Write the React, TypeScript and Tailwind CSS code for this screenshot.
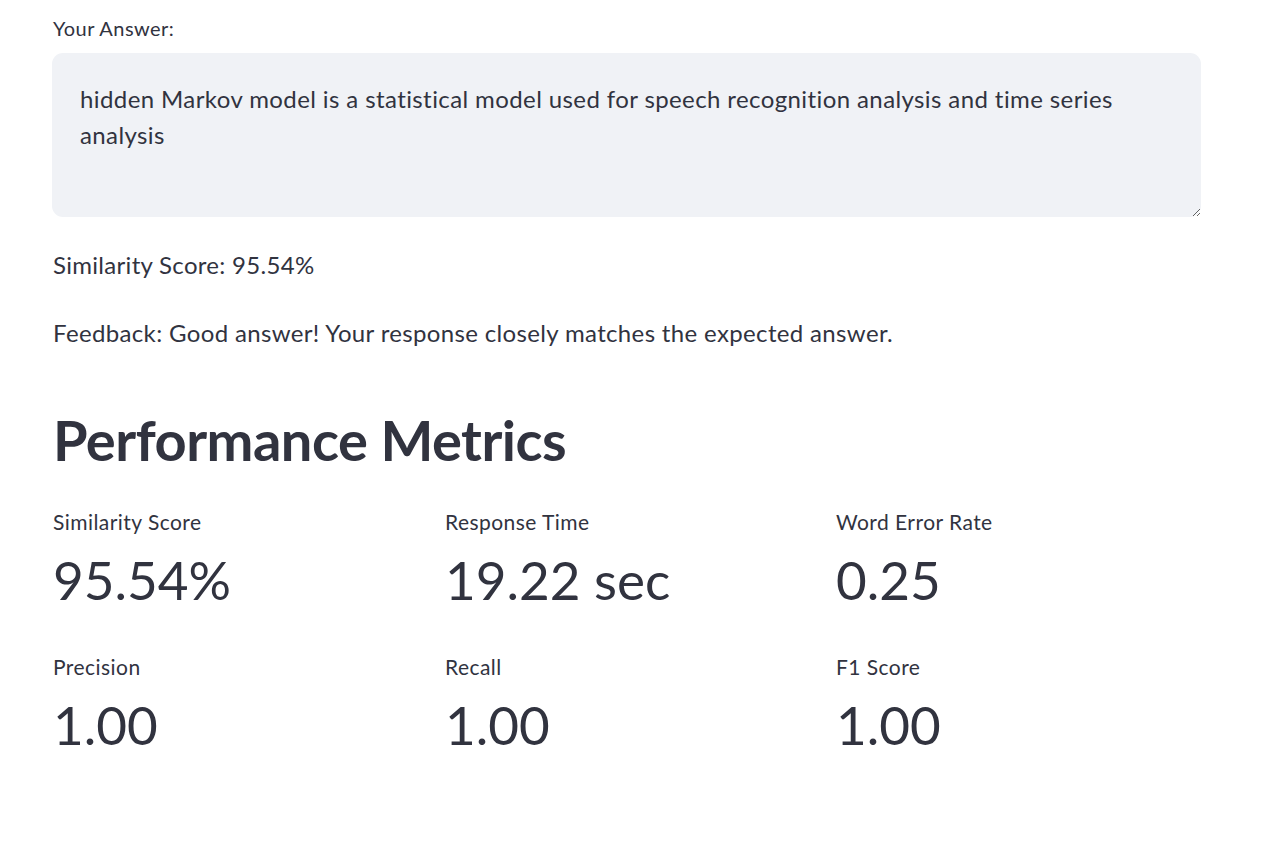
import React from 'react';

const metrics = [
  { label: 'Similarity Score', value: '95.54%' },
  { label: 'Response Time', value: '19.22 sec' },
  { label: 'Word Error Rate', value: '0.25' },
  { label: 'Precision', value: '1.00' },
  { label: 'Recall', value: '1.00' },
  { label: 'F1 Score', value: '1.00' },
];

export default function App() {
  return (
    <div
      className="min-h-screen bg-white text-[#31333f]"
      style={{ fontFamily: 'Lato, "Noto Sans", sans-serif' }}
    >
      <div className="w-[1149px] ml-[52px] pt-[15px]">
        {/* Answer box */}
        <label className="block text-[20px] leading-[26px] tracking-[0.45px] pl-[1px]">Your Answer:</label>
        <textarea
          readOnly
          defaultValue="hidden Markov model is a statistical model used for speech recognition analysis and time series analysis"
          className="mt-[12px] block w-full h-[164px] rounded-[11px] bg-[#f0f2f6] px-[28px] pt-[28px] text-[24px] leading-[36px] tracking-[0.4px] text-[#31333f] outline-none border-0"
        />

        {/* Result text */}
        <p className="mt-[32px] pl-[1px] text-[24px] leading-[32px] tracking-[0.3px]">Similarity Score: 95.54%</p>
        <p className="mt-[36px] pl-[1px] text-[24px] leading-[32px] tracking-[0.35px]">
          Feedback: Good answer! Your response closely matches the expected answer.
        </p>

        {/* Metrics */}
        <h2 className="mt-[56px] pl-[1px] text-[56px] leading-[70px] font-bold tracking-[-0.5px]">
          Performance Metrics
        </h2>
        <div className="mt-[34px] grid grid-cols-[392px_391px_1fr] gap-y-[44px] pl-[1px]">
          {metrics.map((m) => (
            <div key={m.label}>
              <div className="text-[21px] leading-[26px] tracking-[0.45px]">{m.label}</div>
              <div className="mt-[15px] text-[53px] leading-[60px]">{m.value}</div>
            </div>
          ))}
        </div>
      </div>
    </div>
  );
}
